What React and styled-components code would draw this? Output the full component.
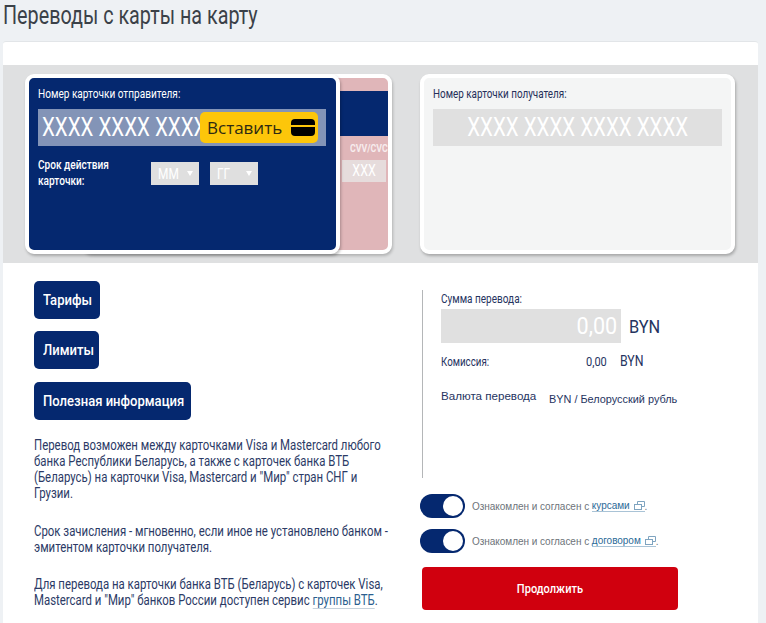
import React from "react";
import styled, { createGlobalStyle } from "styled-components";

const GlobalStyle = createGlobalStyle`
  html, body {
    margin: 0;
    padding: 0;
    background: #eef1f4;
    overflow: hidden;
  }
  * { box-sizing: border-box; }
`;

const Page = styled.div`
  width: 766px;
  height: 623px;
  overflow: hidden;
  font-family: "Roboto", sans-serif;
  color: #26345f;
`;

// the original font is a narrow one, none is installed, so Roboto gets squeezed
const Squeeze = styled.span`
  display: inline-block;
  white-space: nowrap;
  transform: scaleX(${(p) => p.$x});
  transform-origin: ${(p) => p.$origin || "left"} center;
`;

const Title = styled.h1`
  margin: 0;
  height: 41px;
  padding-left: 3px;
  font-size: 26px;
  font-weight: 400;
  line-height: 31px;
  color: #3b4148;
`;

const Panel = styled.div`
  margin-left: 3px;
  width: 755px;
  height: 582px;
  background: #fff;
  border-top: 1px solid #e2e5e8;
  border-radius: 3px 3px 0 0;
  padding-top: 23px;
`;

const Band = styled.div`
  display: flex;
  height: 198px;
  padding: 9px 0 0 22px;
  background: #dfe0e1;
`;

const CardStack = styled.div`
  position: relative;
  width: 367px;
  height: 180px;
  margin-right: 28px;
`;

const BackCard = styled.div`
  position: absolute;
  top: 0;
  right: 0;
  width: 310px;
  height: 180px;
  padding-top: 13px;
  background: #e0b6b9;
  border: 4px solid #fff;
  border-radius: 9px;
  box-shadow: 1px 2px 3px rgba(0, 0, 0, 0.2);
`;

const Stripe = styled.div`
  height: 45px;
  background: #05286f;
`;

const CvvBlock = styled.div`
  display: flex;
  flex-direction: column;
  align-items: flex-end;
  padding: 6px 2px 0 0;
`;

const CvvLabel = styled.div`
  width: 38px;
  margin-right: -2px;
  font-size: 11px;
  font-weight: 700;
  line-height: 13px;
  color: #fff;
  overflow: hidden;
  opacity: 0.75;
`;

const CvvInput = styled.div`
  width: 44px;
  height: 22px;
  margin-top: 5px;
  background: #e6dcdc;
  color: #fff;
  font-size: 16px;
  line-height: 22px;
  text-align: center;
`;

const Card = styled.div`
  position: relative;
  width: 315px;
  height: 180px;
  padding: 8px 9px 0;
  background: ${(p) => (p.$front ? "#05286f" : "#f4f5f5")};
  border: 4px solid #fff;
  border-radius: 9px;
  box-shadow: 1px 2px 3px rgba(0, 0, 0, 0.25);
  color: ${(p) => (p.$front ? "#fff" : "#26305a")};
`;

const CardLabel = styled.div`
  height: 23px;
  font-size: 13px;
  line-height: 15px;
`;

const NumberField = styled.div`
  position: relative;
  width: ${(p) => (p.$front ? "288px" : "289px")};
  height: 37px;
  padding-left: ${(p) => (p.$front ? "4px" : "0")};
  background: ${(p) => (p.$front ? "#8394b7" : "#e0e0e0")};
  color: #fff;
  font-size: 25px;
  line-height: 37px;
  text-align: ${(p) => (p.$front ? "left" : "center")};
  white-space: nowrap;
  overflow: hidden;
`;

const PasteButton = styled.div`
  position: absolute;
  top: 3px;
  right: 8px;
  display: flex;
  align-items: center;
  width: 118px;
  height: 31px;
  padding-left: 7px;
  background: #fdc60a;
  border-radius: 5px;
  color: #2e2a12;
  font-family: "Open Sans", sans-serif;
  font-size: 17px;
  line-height: 31px;
`;

const ChipIcon = styled.svg`
  position: absolute;
  top: 7px;
  right: 3px;
  width: 24px;
  height: 17px;
`;

const ExpiryRow = styled.div`
  display: flex;
  align-items: flex-start;
  margin-top: 11px;
`;

const ExpiryLabel = styled.div`
  width: 113px;
  font-size: 13px;
  font-weight: 500;
  line-height: 16px;
`;

const Select = styled.div`
  display: flex;
  align-items: center;
  justify-content: space-between;
  width: 48px;
  height: 23px;
  margin: 5px 11px 0 0;
  padding: 0 6px 0 7px;
  background: #dfdfdf;
  color: #fff;
  font-size: 14px;
`;

const Arrow = styled.span`
  width: 0;
  height: 0;
  border-left: 3px solid transparent;
  border-right: 3px solid transparent;
  border-top: 5px solid #fff;
`;

const Lower = styled.div`
  display: flex;
  padding-top: 18px;
`;

const LeftColumn = styled.div`
  width: 417px;
  padding-left: 31px;
`;

const ActionButton = styled.div`
  width: ${(p) => p.$width}px;
  height: 38px;
  margin-bottom: ${(p) => p.$gap}px;
  padding-left: 9px;
  background: #05286f;
  border-radius: 5px;
  color: #fff;
  font-size: 15px;
  font-weight: 500;
  line-height: 38px;
`;

const Paragraph = styled.p`
  width: 440px;
  margin: 0 0 ${(p) => p.$gap || 21}px;
  font-size: 14px;
  line-height: 16px;
  color: #2b3a66;
  white-space: nowrap;
  transform: scaleX(0.815);
  transform-origin: left center;
`;

const GroupLink = styled.span`
  color: #2b5f8f;
  border-bottom: 1px solid #c5d2dc;
`;

const RightColumn = styled.div`
  width: 320px;
`;

const Summary = styled.div`
  height: 188px;
  margin: 9px 0 16px 2px;
  padding: 1px 0 0 18px;
  border-left: 1px solid #b4b6b8;
`;

const SumLabel = styled.div`
  font-size: 13px;
  line-height: 15px;
`;

const SumRow = styled.div`
  display: flex;
  align-items: center;
  margin-top: 3px;
`;

const SumField = styled.div`
  width: 180px;
  height: 34px;
  padding-right: 4px;
  background: #e0e0e0;
  color: #fff;
  font-size: 24px;
  line-height: 34px;
  text-align: right;
`;

const Currency = styled.span`
  margin-left: 8px;
  font-size: 19px;
  color: #26345f;
`;

const FeeRow = styled.div`
  display: flex;
  margin-top: 11px;
  font-size: 13px;
  line-height: 15px;
`;

const FeeLabel = styled.span`
  width: 145px;
`;

const FeeCurrency = styled.span`
  margin-left: 10px;
  font-size: 14px;
`;

const RateRow = styled.div`
  display: flex;
  align-items: flex-start;
  margin-top: 20px;
  font-family: "Liberation Sans", sans-serif;
`;

const RateLabel = styled.span`
  width: 108px;
  font-size: 11.6px;
  line-height: 14px;
`;

const RateValue = styled.span`
  padding-top: 3px;
  font-size: 10.9px;
  line-height: 14px;
`;

const Consent = styled.div`
  display: flex;
  align-items: center;
  height: 24px;
  margin-bottom: 11px;
  font-family: "Liberation Sans", sans-serif;
  font-size: 10px;
  letter-spacing: -0.03px;
  color: #6d7379;
`;

const Toggle = styled.span`
  display: flex;
  justify-content: flex-end;
  width: 45px;
  height: 24px;
  margin-right: 7px;
  padding: 2px;
  background: #05286f;
  border-radius: 12px;
`;

const Knob = styled.span`
  width: 20px;
  height: 20px;
  background: #fff;
  border-radius: 50%;
`;

const ConsentLink = styled.span`
  display: inline-flex;
  align-items: center;
  color: #2b6a98;
  border-bottom: 1px solid #a9c3d6;
`;

const LinkIcon = styled.svg`
  width: 11px;
  height: 9px;
  margin-left: 4px;
`;

const SubmitButton = styled.div`
  width: 256px;
  height: 43px;
  margin: 14px 0 0 2px;
  background: #d0000e;
  border-radius: 4px;
  color: #fff;
  font-size: 13px;
  font-weight: 500;
  line-height: 43px;
  text-align: center;
`;

const ExternalIcon = () => (
  <LinkIcon viewBox="0 0 11 9" fill="none" stroke="#7fa4c0" strokeWidth="1">
    <rect x="0.5" y="3.5" width="7" height="5" />
    <path d="M3.5 3.5V0.5H10.5V5.5H7.5" />
  </LinkIcon>
);

const App = () => {
  return (
    <Page>
      <GlobalStyle />
      <Title>
        <Squeeze $x={0.76}>Переводы с карты на карту</Squeeze>
      </Title>
      <Panel>
        <Band>
          <CardStack>
            <BackCard>
              <Stripe />
              <CvvBlock>
                <CvvLabel>
                  <Squeeze $x={0.8}>CVV/CVC</Squeeze>
                </CvvLabel>
                <CvvInput>
                  <Squeeze $x={0.78} $origin="center">XXX</Squeeze>
                </CvvInput>
              </CvvBlock>
            </BackCard>
            <Card $front>
              <CardLabel>
                <Squeeze $x={0.775}>Номер карточки отправителя:</Squeeze>
              </CardLabel>
              <NumberField $front>
                <Squeeze $x={0.82}>XXXX XXXX XXXX</Squeeze>
                <PasteButton>
                  Вставить
                  <ChipIcon viewBox="0 0 24 17">
                    <rect width="24" height="17" rx="4" fill="#000" />
                    <rect y="6" width="24" height="2" fill="#fdc60a" />
                  </ChipIcon>
                </PasteButton>
              </NumberField>
              <ExpiryRow>
                <ExpiryLabel>
                  <Squeeze $x={0.775}>
                    Срок действия
                    <br />
                    карточки:
                  </Squeeze>
                </ExpiryLabel>
                <Select>
                  <Squeeze $x={0.85}>ММ</Squeeze>
                  <Arrow />
                </Select>
                <Select>
                  <Squeeze $x={0.85}>ГГ</Squeeze>
                  <Arrow />
                </Select>
              </ExpiryRow>
            </Card>
          </CardStack>
          <Card>
            <CardLabel>
              <Squeeze $x={0.76}>Номер карточки получателя:</Squeeze>
            </CardLabel>
            <NumberField>
              <Squeeze $x={0.82} $origin="center">XXXX XXXX XXXX XXXX</Squeeze>
            </NumberField>
          </Card>
        </Band>
        <Lower>
          <LeftColumn>
            <ActionButton $width={66} $gap={12}>
              <Squeeze $x={0.87}>Тарифы</Squeeze>
            </ActionButton>
            <ActionButton $width={65} $gap={13}>
              <Squeeze $x={0.87}>Лимиты</Squeeze>
            </ActionButton>
            <ActionButton $width={157} $gap={17}>
              <Squeeze $x={0.87}>Полезная информация</Squeeze>
            </ActionButton>
            <Paragraph $gap={22}>
              Перевод возможен между карточками Visa и Mastercard любого
              <br />
              банка Республики Беларусь, а также с карточек банка ВТБ
              <br />
              (Беларусь) на карточки Visa, Mastercard и "Мир" стран СНГ и
              <br />
              Грузии.
            </Paragraph>
            <Paragraph>
              Срок зачисления - мгновенно, если иное не установлено банком -
              <br />
              эмитентом карточки получателя.
            </Paragraph>
            <Paragraph>
              Для перевода на карточки банка ВТБ (Беларусь) с карточек Visa,
              <br />
              Mastercard и "Мир" банков России доступен сервис{" "}
              <GroupLink>группы ВТБ</GroupLink>.
            </Paragraph>
          </LeftColumn>
          <RightColumn>
            <Summary>
              <SumLabel>
                <Squeeze $x={0.77}>Сумма перевода:</Squeeze>
              </SumLabel>
              <SumRow>
                <SumField>
                  <Squeeze $x={0.9} $origin="right">0,00</Squeeze>
                </SumField>
                <Currency>
                  <Squeeze $x={0.86}>BYN</Squeeze>
                </Currency>
              </SumRow>
              <FeeRow>
                <FeeLabel>
                  <Squeeze $x={0.75}>Комиссия:</Squeeze>
                </FeeLabel>
                <Squeeze $x={0.85}>0,00</Squeeze>
                <FeeCurrency>
                  <Squeeze $x={0.88}>BYN</Squeeze>
                </FeeCurrency>
              </FeeRow>
              <RateRow>
                <RateLabel>Валюта перевода</RateLabel>
                <RateValue>BYN / Белорусский рубль</RateValue>
              </RateRow>
            </Summary>
            <Consent>
              <Toggle><Knob /></Toggle>
              <span>Ознакомлен и согласен с&nbsp;</span>
              <ConsentLink>курсами<ExternalIcon /></ConsentLink>.
            </Consent>
            <Consent>
              <Toggle><Knob /></Toggle>
              <span>Ознакомлен и согласен с&nbsp;</span>
              <ConsentLink>договором<ExternalIcon /></ConsentLink>.
            </Consent>
            <SubmitButton>
              <Squeeze $x={0.85} $origin="center">Продолжить</Squeeze>
            </SubmitButton>
          </RightColumn>
        </Lower>
      </Panel>
    </Page>
  );
};

export default App;
